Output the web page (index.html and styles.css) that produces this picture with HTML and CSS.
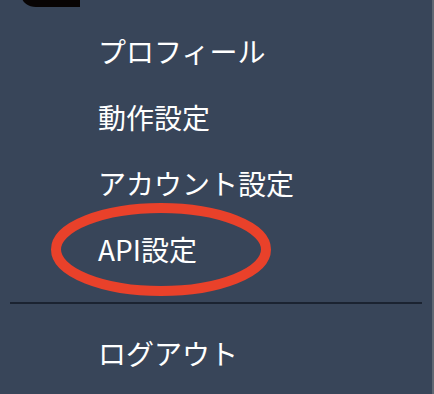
FILE: index.html
```html
<!DOCTYPE html>
<html lang="ja">
<head>
<meta charset="utf-8">
<link rel="stylesheet" href="styles.css">
</head>
<body>
<div class="frame">
  <nav class="panel">
    <div class="tab-edge"></div>
    <ul class="menu">
      <li class="item">プロフィール</li>
      <li class="item">動作設定</li>
      <li class="item">アカウント設定</li>
      <li class="item item-marked">API設定
        <svg class="mark" width="230" height="103" viewBox="0 0 230 103">
          <ellipse cx="115" cy="51.5" rx="105" ry="41.5" fill="none" stroke="#e9412a" stroke-width="10"/>
        </svg>
      </li>
    </ul>
    <hr class="divider">
    <ul class="menu menu-bottom">
      <li class="item">ログアウト</li>
    </ul>
  </nav>
  <div class="edge"></div>
</div>
</body>
</html>
```
FILE: styles.css
```css
html, body {
  margin: 0;
  padding: 0;
  height: 100%;
}
body {
  background: #384559;
  font-family: "Noto Sans CJK JP", "Noto Sans", sans-serif;
  color: #ffffff;
  overflow: hidden;
}
.frame {
  display: flex;
  height: 100%;
}
.panel {
  flex: 1;
  position: relative;
  padding-top: 18px;
}
.edge {
  width: 2px;
  background: #5f6873;
}
.tab-edge {
  position: absolute;
  left: 22px;
  top: -3px;
  width: 58px;
  height: 10px;
  background: #080404;
  border-bottom-left-radius: 14px 10px;
}
.menu {
  list-style: none;
  margin: 0;
  padding: 0;
}
.item {
  height: 66px;
  line-height: 66px;
  padding-left: 98px;
  font-size: 28px;
  font-weight: 400;
  white-space: nowrap;
}
.item-marked {
  position: relative;
}
.mark {
  position: absolute;
  left: 46px;
  top: -18px;
}
.divider {
  margin: 20px 10px 16px 10px;
  border: 0;
  height: 2px;
  background: #1b2331;
}
```
